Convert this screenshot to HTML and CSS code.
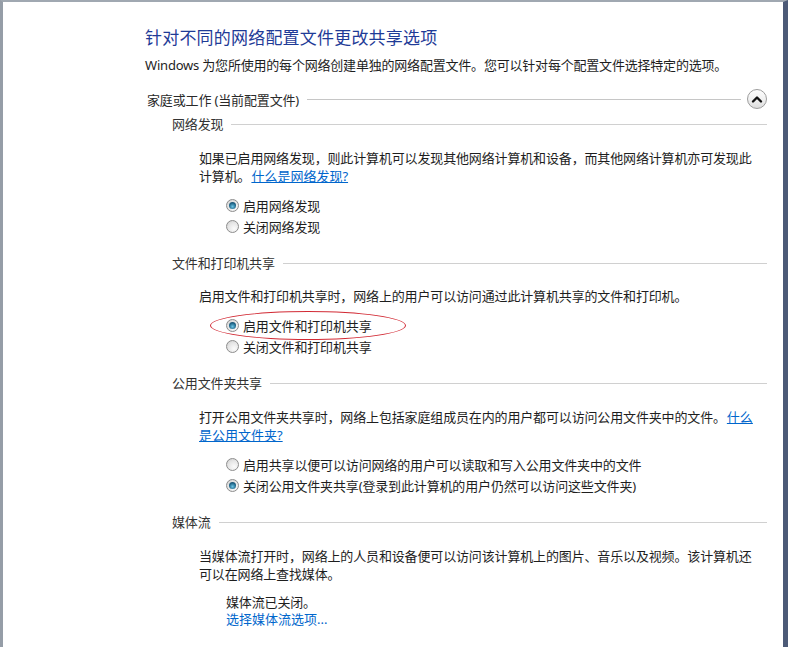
FILE: index.html
```html
<!DOCTYPE html>
<html lang="zh">
  <head>
    <meta charset="UTF-8" />
    <meta name="viewport" content="width=device-width, initial-scale=1.0" />
    <title>高级共享设置</title>
    <link rel="stylesheet" href="styles.css">
  </head>
  <body>
    <div class="window">
      <div class="content">
        <h1 class="title">针对不同的网络配置文件更改共享选项</h1>
        <p class="subtitle">Windows 为您所使用的每个网络创建单独的网络配置文件。您可以针对每个配置文件选择特定的选项。</p>

        <div class="profile-head">
          <span>家庭或工作 (当前配置文件)</span>
          <span class="rule"></span>
          <button class="collapse" type="button" title="折叠">
            <svg width="12" height="10" viewBox="0 0 12 10">
              <polyline points="2,7.5 6,3.5 10,7.5" fill="none" stroke="#111" stroke-width="2.4" stroke-linecap="round" stroke-linejoin="round" />
            </svg>
          </button>
        </div>

        <!-- 网络发现 -->
        <div class="section">
          <div class="section-head"><span>网络发现</span><span class="rule"></span></div>
          <div class="section-body">
            <p><span>如果已启用网络发现，则此计算机可以发现其他网络计算机和设备，而其他网络计算机亦可发现此计算机。</span><a href="#">什么是网络发现?</a></p>
            <div class="options">
              <label class="option"><span class="radio checked"></span>启用网络发现</label>
              <label class="option"><span class="radio"></span>关闭网络发现</label>
            </div>
          </div>
        </div>

        <!-- 文件和打印机共享 -->
        <div class="section">
          <div class="section-head"><span>文件和打印机共享</span><span class="rule"></span></div>
          <div class="section-body">
            <p class="tight">启用文件和打印机共享时，网络上的用户可以访问通过此计算机共享的文件和打印机。</p>
            <div class="options">
              <span class="ellipse"></span>
              <label class="option"><span class="radio checked"></span>启用文件和打印机共享</label>
              <label class="option"><span class="radio"></span>关闭文件和打印机共享</label>
            </div>
          </div>
        </div>

        <!-- 公用文件夹共享 -->
        <div class="section">
          <div class="section-head"><span>公用文件夹共享</span><span class="rule"></span></div>
          <div class="section-body">
            <p><span>打开公用文件夹共享时，网络上包括家庭组成员在内的用户都可以访问公用文件夹中的文件。</span><a href="#">什么是公用文件夹?</a></p>
            <div class="options">
              <label class="option"><span class="radio"></span>启用共享以便可以访问网络的用户可以读取和写入公用文件夹中的文件</label>
              <label class="option"><span class="radio checked"></span>关闭公用文件夹共享(登录到此计算机的用户仍然可以访问这些文件夹)</label>
            </div>
          </div>
        </div>

        <!-- 媒体流 -->
        <div class="section">
          <div class="section-head"><span>媒体流</span><span class="rule"></span></div>
          <div class="section-body">
            <p>当媒体流打开时，网络上的人员和设备便可以访问该计算机上的图片、音乐以及视频。该计算机还可以在网络上查找媒体。</p>
            <div class="status">
              <div>媒体流已关闭。</div>
              <a href="#" class="plain-link">选择媒体流选项...</a>
            </div>
          </div>
        </div>
      </div>
    </div>
  </body>
</html>
```

FILE: styles.css
```css
* {
  box-sizing: border-box;
}

html,
body {
  margin: 0;
  background: #fff;
}

body {
  font-family: "Noto Sans", "Noto Sans CJK SC", sans-serif;
  font-size: 13px;
  letter-spacing: -0.15px;
  color: #1e1e1e;
}

.window {
  width: 788px;
  height: 647px;
  overflow: hidden;
  background: #fff;
  border-left: 3px solid #959da7;
  border-top: 2px solid #a0a8b1;
  border-right: 5px solid #4c5a77;
}

.content {
  padding: 24px 16px 0 142px;
}

.title {
  margin: 0;
  font-size: 17px;
  font-weight: normal;
  line-height: 24px;
  letter-spacing: 0.2px;
  color: #1f3b97;
}

.subtitle {
  margin: 6px 0 0;
  line-height: 18px;
  letter-spacing: -0.2px;
}

.rule {
  flex: 1;
  height: 1px;
  margin-left: 8px;
  background: #d0d0d0;
}

.profile-head {
  display: flex;
  align-items: center;
  height: 22px;
  margin-top: 14px;
  padding-left: 2px;
  color: #2a2a2a;
}

.profile-head .rule {
  background: #c6c6c6;
}

.collapse {
  width: 20px;
  height: 20px;
  margin-left: 6px;
  padding: 0;
  border: 1px solid #9c9c9c;
  border-radius: 50%;
  background: linear-gradient(#fdfdfd, #f1f1f1 50%, #dcdcdc);
  display: flex;
  justify-content: center;
  align-items: center;
  cursor: pointer;
}

.section {
  margin-top: 17px;
  padding-left: 27px;
}

.profile-head + .section {
  margin-top: 5px;
}

.section-head {
  display: flex;
  align-items: center;
  height: 18px;
  line-height: 18px;
  color: #333;
}

.section-body {
  padding-left: 27px;
  padding-right: 9px;
}

.section-body p {
  margin: 16px 0 0;
  line-height: 18px;
}

.section-body p.tight {
  margin-top: 15px;
}

a {
  color: #0066cc;
  letter-spacing: 0;
  margin-left: 1px;
}

.plain-link {
  text-decoration: none;
  margin-left: 0;
}

.options {
  position: relative;
  margin-top: 10px;
  padding-left: 27px;
}

.option {
  display: flex;
  align-items: center;
  gap: 4px;
  height: 21px;
}

.radio {
  position: relative;
  flex: none;
  width: 13px;
  height: 13px;
  border: 1px solid #8d8d8d;
  border-radius: 50%;
  background: radial-gradient(circle at 65% 70%, #fbfbfb, #e6e6e6 55%, #c9c9c9);
}

.radio.checked::after {
  content: "";
  position: absolute;
  left: 2px;
  top: 2px;
  width: 7px;
  height: 7px;
  border-radius: 50%;
  background: radial-gradient(circle at 50% 65%, #6cc4e4, #22698c 55%, #0f3a55);
}

.ellipse {
  position: absolute;
  left: 11px;
  top: -4px;
  width: 196px;
  height: 29px;
  border: 1px solid #d22b35;
  border-radius: 50%;
  pointer-events: none;
}

.status {
  margin-top: 11px;
  padding-left: 27px;
  line-height: 17px;
}
```
